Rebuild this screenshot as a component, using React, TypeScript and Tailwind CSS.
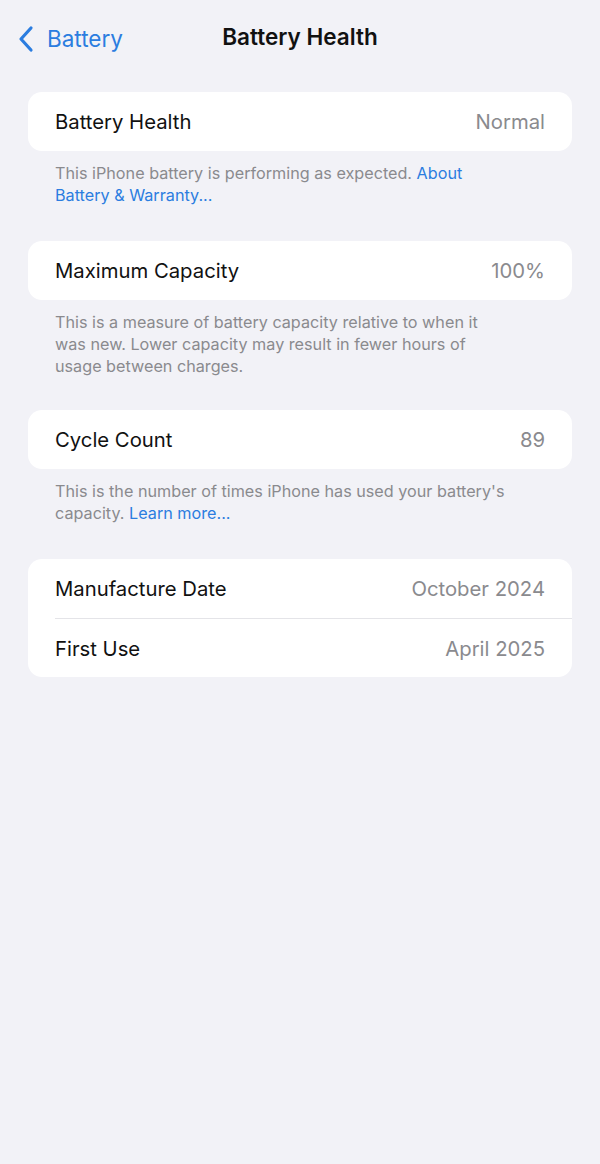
const font = { fontFamily: 'Inter, "Noto Sans", sans-serif' };

type Row = { label: string; value: string };

function Card({ rows }: { rows: Row[] }) {
  return (
    <div className="mx-[28px] rounded-[14px] bg-white">
      {rows.map((r, i) => (
        <div key={r.label} className="pl-[27px]">
          <div
            className={`flex h-[59px] items-center justify-between pr-[27px] ${
              i > 0 ? 'border-t border-[#e4e4e8]' : ''
            }`}
          >
            <span className="pt-[2px] text-[20.3px] text-[#111]">{r.label}</span>
            <span className="pt-[2px] text-[20.3px] text-[#8a8a8e]">{r.value}</span>
          </div>
        </div>
      ))}
    </div>
  );
}

function Footer({ children }: { children: React.ReactNode }) {
  return (
    <p className="ml-[55px] mt-[11px] w-[454px] text-[16.2px] leading-[22px] text-[#8a8a8e]">
      {children}
    </p>
  );
}

export default function App() {
  return (
    <div className="min-h-[1164px] w-[600px] bg-[#f2f2f7]" style={font}>
      {/* Nav bar */}
      <div className="relative flex h-[76px] items-center justify-center">
        <div className="absolute left-[16px] top-[22px] flex items-center gap-[11px] text-[#2b7de0]">
          <svg width="20" height="28" viewBox="0 0 20 28" fill="none">
            <path
              d="M15 3 L5 14 L15 25"
              stroke="currentColor"
              strokeWidth="3.2"
              strokeLinecap="round"
              strokeLinejoin="round"
            />
          </svg>
          <span className="text-[22.5px]">Battery</span>
        </div>
        <h1 className="-mt-[2px] text-[22.5px] font-semibold text-[#111]">Battery Health</h1>
      </div>

      <div className="pt-[16px]">
        <Card rows={[{ label: 'Battery Health', value: 'Normal' }]} />
        <Footer>
          This iPhone battery is performing as expected.{' '}
          <span className="text-[#2b7de0]">About Battery &amp; Warranty...</span>
        </Footer>

        <div className="h-[35px]" />
        <Card rows={[{ label: 'Maximum Capacity', value: '100%' }]} />
        <Footer>
          This is a measure of battery capacity relative to when it was new. Lower capacity may
          result in fewer hours of usage between charges.
        </Footer>

        <div className="h-[33px]" />
        <Card rows={[{ label: 'Cycle Count', value: '89' }]} />
        <Footer>
          This is the number of times iPhone has used your battery's capacity.{' '}
          <span className="text-[#2b7de0]">Learn more...</span>
        </Footer>

        <div className="h-[35px]" />
        <Card
          rows={[
            { label: 'Manufacture Date', value: 'October 2024' },
            { label: 'First Use', value: 'April 2025' },
          ]}
        />
      </div>
    </div>
  );
}
